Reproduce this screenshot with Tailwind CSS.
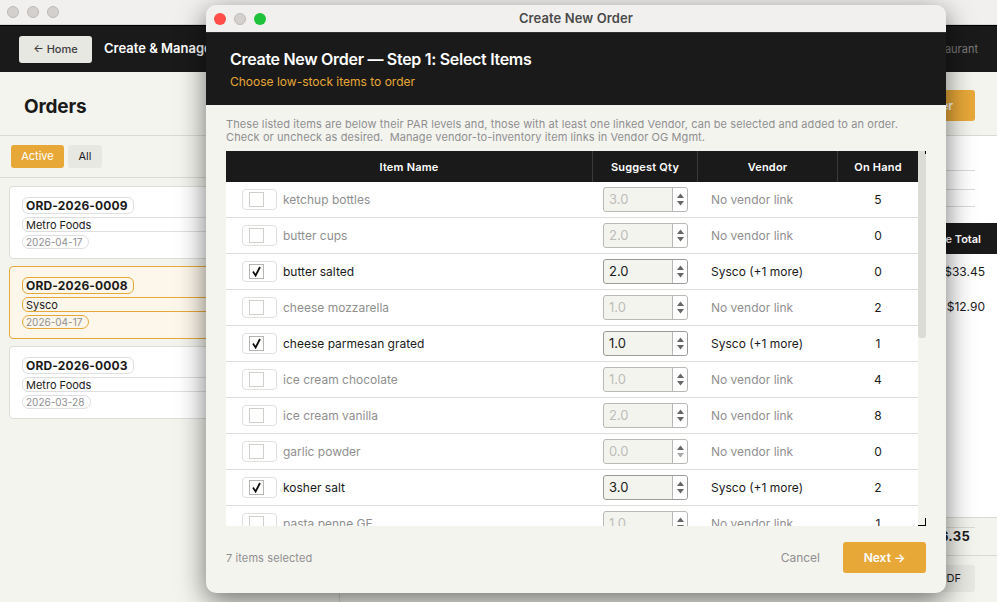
<!DOCTYPE html>
<html lang="en">
<head>
<meta charset="utf-8">
<title>Create New Order</title>
<script src="https://cdn.jsdelivr.net/npm/@tailwindcss/browser@4"></script>
</head>
<body class="m-0 overflow-hidden">
<div class="relative w-[997px] h-[602px] overflow-hidden bg-[#f4f4ef] font-['Inter',sans-serif] text-[#1a1a1a]">
  <!-- Background window -->
  <div class="flex flex-col h-full">
    <div class="h-[25px] bg-[#f2f0ef] flex items-center gap-2 pl-[7px] border-b border-[#d8d6d4]">
      <span class="w-3 h-3 rounded-full bg-[#d3d0ce] border border-[#bdbab8]"></span>
      <span class="w-3 h-3 rounded-full bg-[#d3d0ce] border border-[#bdbab8]"></span>
      <span class="w-3 h-3 rounded-full bg-[#d3d0ce] border border-[#bdbab8]"></span>
    </div>
    <div class="h-[47px] bg-[#1a1a1a] border-t border-black flex items-center pl-[19px] pr-[19px]">
      <div class="w-[73px] h-[27px] rounded-[3px] bg-[#e8e8e3] flex items-center justify-center text-[11px] font-medium text-[#3d3d3d]">← Home</div>
      <div class="ml-3 text-[13px] font-semibold text-white">Create &amp; Manage Orders</div>
      <div class="ml-auto text-[11px] text-[#7c7c7c]">Main Restaurant</div>
    </div>
    <div class="flex flex-1 min-h-0">
      <div class="w-[340px] border-r border-[#d8d8d2] flex flex-col">
        <div class="h-[64px] pl-6 pt-[7px] flex items-center border-b border-[#dadad5]">
          <span class="text-[19px] font-bold tracking-[-0.2px]">Orders</span>
        </div>
        <div class="h-[42px] flex items-center gap-1 pl-[11px] border-b border-[#dadad5]">
          <span class="w-[53px] h-[23px] rounded-[3px] bg-[#e8a838] text-white text-[11px] flex items-center justify-center">Active</span>
          <span class="w-[34px] h-[23px] rounded-[3px] bg-[#e8e8e3] text-[11px] flex items-center justify-center">All</span>
        </div>
        <div class="flex flex-col gap-[7px] pt-[8px] pl-[9px] pr-[9px]">
          <div class="h-[73px] rounded-[4px] bg-white border border-[#dedeD9] pl-3 pr-3 pt-[10px] flex flex-col items-start">
            <span class="h-[17px] w-[112px] border border-[#dedee0] rounded-[6px] flex items-center pl-[3px] text-[12px] font-bold tracking-[0.15px] whitespace-nowrap">ORD-2026-0009</span>
            <span class="mt-[3px] h-[15px] w-full border border-[#dedee0] rounded-[6px] flex items-center pl-[3px] pt-[1px] text-[11px]">Metro Foods</span>
            <span class="mt-[3px] h-[14px] w-[67px] border border-[#dedee0] rounded-[7px] flex items-center pl-[3px] text-[10px] text-[#8f8f8f]">2026-04-17</span>
          </div>
          <div class="h-[73px] rounded-[4px] bg-[#fdf6ea] border border-[#e8a838] pl-3 pr-3 pt-[10px] flex flex-col items-start">
            <span class="h-[17px] w-[112px] border border-[#e8a838] rounded-[6px] flex items-center pl-[3px] text-[12px] font-bold tracking-[0.15px] whitespace-nowrap">ORD-2026-0008</span>
            <span class="mt-[3px] h-[15px] w-full border border-[#e8a838] rounded-[6px] flex items-center pl-[3px] pt-[1px] text-[11px]">Sysco</span>
            <span class="mt-[3px] h-[14px] w-[67px] border border-[#e8a838] rounded-[7px] flex items-center pl-[3px] text-[10px] text-[#8f8f8f]">2026-04-17</span>
          </div>
          <div class="h-[73px] rounded-[4px] bg-white border border-[#dedeD9] pl-3 pr-3 pt-[10px] flex flex-col items-start">
            <span class="h-[17px] w-[112px] border border-[#dedee0] rounded-[6px] flex items-center pl-[3px] text-[12px] font-bold tracking-[0.15px] whitespace-nowrap">ORD-2026-0003</span>
            <span class="mt-[3px] h-[15px] w-full border border-[#dedee0] rounded-[6px] flex items-center pl-[3px] pt-[1px] text-[11px]">Metro Foods</span>
            <span class="mt-[3px] h-[14px] w-[69px] border border-[#dedee0] rounded-[7px] flex items-center pl-[3px] text-[10px] text-[#8f8f8f]">2026-03-28</span>
          </div>
        </div>
      </div>
      <div class="flex-1 min-w-0 flex flex-col">
        <div class="h-[64px] shrink-0 flex items-start pt-[18px] justify-end pr-[22px] border-b border-[#dadad5]">
          <span class="w-[110px] h-[31px] rounded-[3px] bg-[#e8a838] text-white text-[12px] font-semibold flex items-center justify-end pr-[22px]">New Order</span>
        </div>
        <div class="bg-white flex-1 flex flex-col">
          <div class="h-[35px] shrink-0 mr-[22px] border-b border-[#dadad5]"></div>
          <div class="h-[19px] shrink-0 mr-[22px] border-b border-[#dadad5]"></div>
          <div class="h-[17px] shrink-0 mr-[22px] border-b border-[#dadad5]"></div>
          <div class="mt-[16px] h-[31px] shrink-0 bg-[#1a1a1a] text-white text-[11px] font-semibold flex items-center justify-end pt-[1px] pr-[16px]">Line Total</div>
          <div class="h-[35px] shrink-0 text-[12px] flex items-center justify-end pr-[12px]">$33.45</div>
          <div class="h-[35px] shrink-0 text-[12px] flex items-center justify-end pr-[12px]">$12.90</div>
          <div class="mt-[193px] border-t border-[#dadad5] bg-[#f4f4ef] flex-1 flex flex-col">
            <div class="mt-[9px] mr-[22px] border-t border-[#dadad5] h-[28px] pb-[9px] flex items-center justify-end pr-[5px] text-[13px] font-bold tracking-[0.3px]">$46.35</div>
            <div class="border-t border-[#dadad5] flex-1 pt-[9px] pr-[22px] flex justify-end">
              <span class="w-[80px] h-[27px] rounded-[3px] bg-[#e8e8e3] text-[11px] flex items-center justify-end pr-[14px]">PDF</span>
            </div>
          </div>
        </div>
      </div>
    </div>
  </div>

  <!-- Modal window over the page -->
  <div class="absolute left-[206px] top-[5px] w-[740px] h-[588px] rounded-[10px] overflow-hidden flex flex-col bg-[#f4f4ef] shadow-[0_8px_28px_rgba(0,0,0,0.55)]">
    <div class="relative h-[28px] shrink-0 bg-[#f2f0ef] flex items-center justify-center gap-2 border-b border-black/80">
      <div class="absolute left-[8px] top-[8px] flex gap-2">
        <span class="w-3 h-3 rounded-full bg-[#ff4d4a]"></span>
        <span class="w-3 h-3 rounded-full bg-[#d3d0ce] border border-[#bdbab8]"></span>
        <span class="w-3 h-3 rounded-full bg-[#1fc23a]"></span>
      </div>
      <span class="text-[13px] font-semibold tracking-[0.1px] text-[#4a4a4a]">Create New Order</span>
    </div>
    <div class="h-[72px] shrink-0 bg-[#1a1a1a] pl-6 pt-[16px]">
      <div class="text-[16px] leading-[20px] font-semibold tracking-[-0.3px] text-white">Create New Order — Step 1: Select Items</div>
      <div class="mt-[5px] text-[12px] leading-[16px] text-[#e8a838]">Choose low-stock items to order</div>
    </div>
    <div class="flex-1 min-h-0 flex flex-col px-5">
      <p class="pt-[13px] h-[46px] shrink-0 text-[11px] leading-[13px] tracking-[0.09px] text-[#8f8f8f] whitespace-pre">These listed items are below their PAR levels and, those with at least one linked Vendor, can be selected and added to an order.
Check or uncheck as desired.  Manage vendor-to-inventory item links in Vendor OG Mgmt.</p>
      <div class="relative h-[375px] shrink-0 overflow-hidden flex">
        <div class="w-[692px] shrink-0">
          <div class="grid grid-cols-[367px_105px_140px_80px] h-[31px] bg-[#1a1a1a] text-white text-[11px] font-semibold tracking-[0.2px] text-center">
            <div class="flex items-center justify-center pt-[1px] border-r border-[#3a3a3a]">Item Name</div>
            <div class="flex items-center justify-center pt-[1px] border-r border-[#3a3a3a]">Suggest Qty</div>
            <div class="flex items-center justify-center pt-[1px] border-r border-[#3a3a3a]">Vendor</div>
            <div class="flex items-center justify-center pt-[1px]">On Hand</div>
          </div>
          <div class="bg-white text-[12px]">

            <div class="grid grid-cols-[367px_105px_140px_80px] h-[36px] border-b border-[#dcdcd8] items-center">
              <div class="flex items-center pl-4 gap-[6px]"><span class="w-[35px] h-[21px] rounded-[4px] border border-[#e0e0dc] flex items-center pl-[6px]"><span class="w-[15px] h-[15px] border border-[#cfcfcb] bg-white"></span></span><span class="text-[#8f8f8f]">ketchup bottles</span></div>
              <div class="pl-[10px]"><div class="w-[85px] h-[25px] rounded-[3px] border border-[#b8b8b4] bg-[#f4f4ef] flex text-[13px] text-[#bdbdb9]"><span class="w-[69px] border-r border-[#b8b8b4] pl-[5px] pt-[1px] flex items-center">3.0</span><span class="flex-1 bg-white rounded-r-[3px] flex items-center justify-center"><svg width="9" height="15" viewBox="0 0 9 15"><path d="M4.5 1.5 8 6H1z" fill="#666"/><path d="M4.5 13.5 8 9H1z" fill="#666"/></svg></span></div></div>
              <div class="pl-[13px] text-[#8f8f8f]">No vendor link</div>
              <div class="text-center">5</div>
            </div>

            <div class="grid grid-cols-[367px_105px_140px_80px] h-[36px] border-b border-[#dcdcd8] items-center">
              <div class="flex items-center pl-4 gap-[6px]"><span class="w-[35px] h-[21px] rounded-[4px] border border-[#e0e0dc] flex items-center pl-[6px]"><span class="w-[15px] h-[15px] border border-[#cfcfcb] bg-white"></span></span><span class="text-[#8f8f8f]">butter cups</span></div>
              <div class="pl-[10px]"><div class="w-[85px] h-[25px] rounded-[3px] border border-[#b8b8b4] bg-[#f4f4ef] flex text-[13px] text-[#bdbdb9]"><span class="w-[69px] border-r border-[#b8b8b4] pl-[5px] pt-[1px] flex items-center">2.0</span><span class="flex-1 bg-white rounded-r-[3px] flex items-center justify-center"><svg width="9" height="15" viewBox="0 0 9 15"><path d="M4.5 1.5 8 6H1z" fill="#666"/><path d="M4.5 13.5 8 9H1z" fill="#666"/></svg></span></div></div>
              <div class="pl-[13px] text-[#8f8f8f]">No vendor link</div>
              <div class="text-center">0</div>
            </div>

            <div class="grid grid-cols-[367px_105px_140px_80px] h-[36px] border-b border-[#dcdcd8] items-center">
              <div class="flex items-center pl-4 gap-[6px]"><span class="w-[35px] h-[21px] rounded-[4px] border border-[#e0e0dc] flex items-center pl-[6px]"><span class="w-[15px] h-[15px] border border-[#b5b5b1] bg-white flex items-center justify-center"><svg width="11" height="11" viewBox="0 0 11 11"><path d="M2 5.5 4.6 9.5 9 1" fill="none" stroke="#111" stroke-width="1.8"/></svg></span></span><span>butter salted</span></div>
              <div class="pl-[10px]"><div class="w-[85px] h-[25px] rounded-[3px] border border-[#9a9a96] bg-[#f4f4ef] flex text-[13px]"><span class="w-[69px] border-r border-[#b8b8b4] pl-[5px] pt-[1px] flex items-center">2.0</span><span class="flex-1 bg-white rounded-r-[3px] flex items-center justify-center"><svg width="9" height="15" viewBox="0 0 9 15"><path d="M4.5 1.5 8 6H1z" fill="#666"/><path d="M4.5 13.5 8 9H1z" fill="#666"/></svg></span></div></div>
              <div class="pl-[13px]">Sysco (+1 more)</div>
              <div class="text-center">0</div>
            </div>

            <div class="grid grid-cols-[367px_105px_140px_80px] h-[36px] border-b border-[#dcdcd8] items-center">
              <div class="flex items-center pl-4 gap-[6px]"><span class="w-[35px] h-[21px] rounded-[4px] border border-[#e0e0dc] flex items-center pl-[6px]"><span class="w-[15px] h-[15px] border border-[#cfcfcb] bg-white"></span></span><span class="text-[#8f8f8f]">cheese mozzarella</span></div>
              <div class="pl-[10px]"><div class="w-[85px] h-[25px] rounded-[3px] border border-[#b8b8b4] bg-[#f4f4ef] flex text-[13px] text-[#bdbdb9]"><span class="w-[69px] border-r border-[#b8b8b4] pl-[5px] pt-[1px] flex items-center">1.0</span><span class="flex-1 bg-white rounded-r-[3px] flex items-center justify-center"><svg width="9" height="15" viewBox="0 0 9 15"><path d="M4.5 1.5 8 6H1z" fill="#666"/><path d="M4.5 13.5 8 9H1z" fill="#666"/></svg></span></div></div>
              <div class="pl-[13px] text-[#8f8f8f]">No vendor link</div>
              <div class="text-center">2</div>
            </div>

            <div class="grid grid-cols-[367px_105px_140px_80px] h-[36px] border-b border-[#dcdcd8] items-center">
              <div class="flex items-center pl-4 gap-[6px]"><span class="w-[35px] h-[21px] rounded-[4px] border border-[#e0e0dc] flex items-center pl-[6px]"><span class="w-[15px] h-[15px] border border-[#b5b5b1] bg-white flex items-center justify-center"><svg width="11" height="11" viewBox="0 0 11 11"><path d="M2 5.5 4.6 9.5 9 1" fill="none" stroke="#111" stroke-width="1.8"/></svg></span></span><span>cheese parmesan grated</span></div>
              <div class="pl-[10px]"><div class="w-[85px] h-[25px] rounded-[3px] border border-[#9a9a96] bg-[#f4f4ef] flex text-[13px]"><span class="w-[69px] border-r border-[#b8b8b4] pl-[5px] pt-[1px] flex items-center">1.0</span><span class="flex-1 bg-white rounded-r-[3px] flex items-center justify-center"><svg width="9" height="15" viewBox="0 0 9 15"><path d="M4.5 1.5 8 6H1z" fill="#666"/><path d="M4.5 13.5 8 9H1z" fill="#666"/></svg></span></div></div>
              <div class="pl-[13px]">Sysco (+1 more)</div>
              <div class="text-center">1</div>
            </div>

            <div class="grid grid-cols-[367px_105px_140px_80px] h-[36px] border-b border-[#dcdcd8] items-center">
              <div class="flex items-center pl-4 gap-[6px]"><span class="w-[35px] h-[21px] rounded-[4px] border border-[#e0e0dc] flex items-center pl-[6px]"><span class="w-[15px] h-[15px] border border-[#cfcfcb] bg-white"></span></span><span class="text-[#8f8f8f]">ice cream chocolate</span></div>
              <div class="pl-[10px]"><div class="w-[85px] h-[25px] rounded-[3px] border border-[#b8b8b4] bg-[#f4f4ef] flex text-[13px] text-[#bdbdb9]"><span class="w-[69px] border-r border-[#b8b8b4] pl-[5px] pt-[1px] flex items-center">1.0</span><span class="flex-1 bg-white rounded-r-[3px] flex items-center justify-center"><svg width="9" height="15" viewBox="0 0 9 15"><path d="M4.5 1.5 8 6H1z" fill="#666"/><path d="M4.5 13.5 8 9H1z" fill="#666"/></svg></span></div></div>
              <div class="pl-[13px] text-[#8f8f8f]">No vendor link</div>
              <div class="text-center">4</div>
            </div>

            <div class="grid grid-cols-[367px_105px_140px_80px] h-[36px] border-b border-[#dcdcd8] items-center">
              <div class="flex items-center pl-4 gap-[6px]"><span class="w-[35px] h-[21px] rounded-[4px] border border-[#e0e0dc] flex items-center pl-[6px]"><span class="w-[15px] h-[15px] border border-[#cfcfcb] bg-white"></span></span><span class="text-[#8f8f8f]">ice cream vanilla</span></div>
              <div class="pl-[10px]"><div class="w-[85px] h-[25px] rounded-[3px] border border-[#b8b8b4] bg-[#f4f4ef] flex text-[13px] text-[#bdbdb9]"><span class="w-[69px] border-r border-[#b8b8b4] pl-[5px] pt-[1px] flex items-center">2.0</span><span class="flex-1 bg-white rounded-r-[3px] flex items-center justify-center"><svg width="9" height="15" viewBox="0 0 9 15"><path d="M4.5 1.5 8 6H1z" fill="#666"/><path d="M4.5 13.5 8 9H1z" fill="#666"/></svg></span></div></div>
              <div class="pl-[13px] text-[#8f8f8f]">No vendor link</div>
              <div class="text-center">8</div>
            </div>

            <div class="grid grid-cols-[367px_105px_140px_80px] h-[36px] border-b border-[#dcdcd8] items-center">
              <div class="flex items-center pl-4 gap-[6px]"><span class="w-[35px] h-[21px] rounded-[4px] border border-[#e0e0dc] flex items-center pl-[6px]"><span class="w-[15px] h-[15px] border border-[#cfcfcb] bg-white"></span></span><span class="text-[#8f8f8f]">garlic powder</span></div>
              <div class="pl-[10px]"><div class="w-[85px] h-[25px] rounded-[3px] border border-[#b8b8b4] bg-[#f4f4ef] flex text-[13px] text-[#bdbdb9]"><span class="w-[69px] border-r border-[#b8b8b4] pl-[5px] pt-[1px] flex items-center">0.0</span><span class="flex-1 bg-white rounded-r-[3px] flex items-center justify-center"><svg width="9" height="15" viewBox="0 0 9 15"><path d="M4.5 1.5 8 6H1z" fill="#666"/><path d="M4.5 13.5 8 9H1z" fill="#aaa"/></svg></span></div></div>
              <div class="pl-[13px] text-[#8f8f8f]">No vendor link</div>
              <div class="text-center">0</div>
            </div>

            <div class="grid grid-cols-[367px_105px_140px_80px] h-[36px] border-b border-[#dcdcd8] items-center">
              <div class="flex items-center pl-4 gap-[6px]"><span class="w-[35px] h-[21px] rounded-[4px] border border-[#e0e0dc] flex items-center pl-[6px]"><span class="w-[15px] h-[15px] border border-[#b5b5b1] bg-white flex items-center justify-center"><svg width="11" height="11" viewBox="0 0 11 11"><path d="M2 5.5 4.6 9.5 9 1" fill="none" stroke="#111" stroke-width="1.8"/></svg></span></span><span>kosher salt</span></div>
              <div class="pl-[10px]"><div class="w-[85px] h-[25px] rounded-[3px] border border-[#9a9a96] bg-[#f4f4ef] flex text-[13px]"><span class="w-[69px] border-r border-[#b8b8b4] pl-[5px] pt-[1px] flex items-center">3.0</span><span class="flex-1 bg-white rounded-r-[3px] flex items-center justify-center"><svg width="9" height="15" viewBox="0 0 9 15"><path d="M4.5 1.5 8 6H1z" fill="#666"/><path d="M4.5 13.5 8 9H1z" fill="#666"/></svg></span></div></div>
              <div class="pl-[13px]">Sysco (+1 more)</div>
              <div class="text-center">2</div>
            </div>

            <div class="grid grid-cols-[367px_105px_140px_80px] h-[36px] border-b border-[#dcdcd8] items-center">
              <div class="flex items-center pl-4 gap-[6px]"><span class="w-[35px] h-[21px] rounded-[4px] border border-[#e0e0dc] flex items-center pl-[6px]"><span class="w-[15px] h-[15px] border border-[#cfcfcb] bg-white"></span></span><span class="text-[#8f8f8f]">pasta penne GF</span></div>
              <div class="pl-[10px]"><div class="w-[85px] h-[25px] rounded-[3px] border border-[#b8b8b4] bg-[#f4f4ef] flex text-[13px] text-[#bdbdb9]"><span class="w-[69px] border-r border-[#b8b8b4] pl-[5px] pt-[1px] flex items-center">1.0</span><span class="flex-1 bg-white rounded-r-[3px] flex items-center justify-center"><svg width="9" height="15" viewBox="0 0 9 15"><path d="M4.5 1.5 8 6H1z" fill="#666"/><path d="M4.5 13.5 8 9H1z" fill="#666"/></svg></span></div></div>
              <div class="pl-[13px] text-[#8f8f8f]">No vendor link</div>
              <div class="text-center">1</div>
            </div>
          </div>
        </div>
        <div class="w-[8px] shrink-0 relative">
          <div class="h-[187px] bg-[#dcdcd6] rounded-b-[3px]"></div>
          <div class="absolute right-0 top-0 w-px h-[3px] bg-black"></div>
          <div class="absolute left-0 bottom-0 w-[8px] h-[8px] bg-[#f4f4ef] border-r border-b border-black"></div>
        </div>
      </div>
      <div class="flex-1 flex items-center justify-between pb-[4px]">
        <span class="mt-[2px] text-[11px] text-[#8f8f8f] tracking-[0.1px] relative">7 items selected</span>
        <div class="flex items-center gap-[23px]">
          <span class="text-[12px] text-[#8f8f8f]">Cancel</span>
          <span class="w-[83px] h-[31px] rounded-[3px] bg-[#e8a838] text-white text-[12px] font-semibold flex items-center justify-center">Next →</span>
        </div>
      </div>
    </div>
  </div>
</div>
</body>
</html>
